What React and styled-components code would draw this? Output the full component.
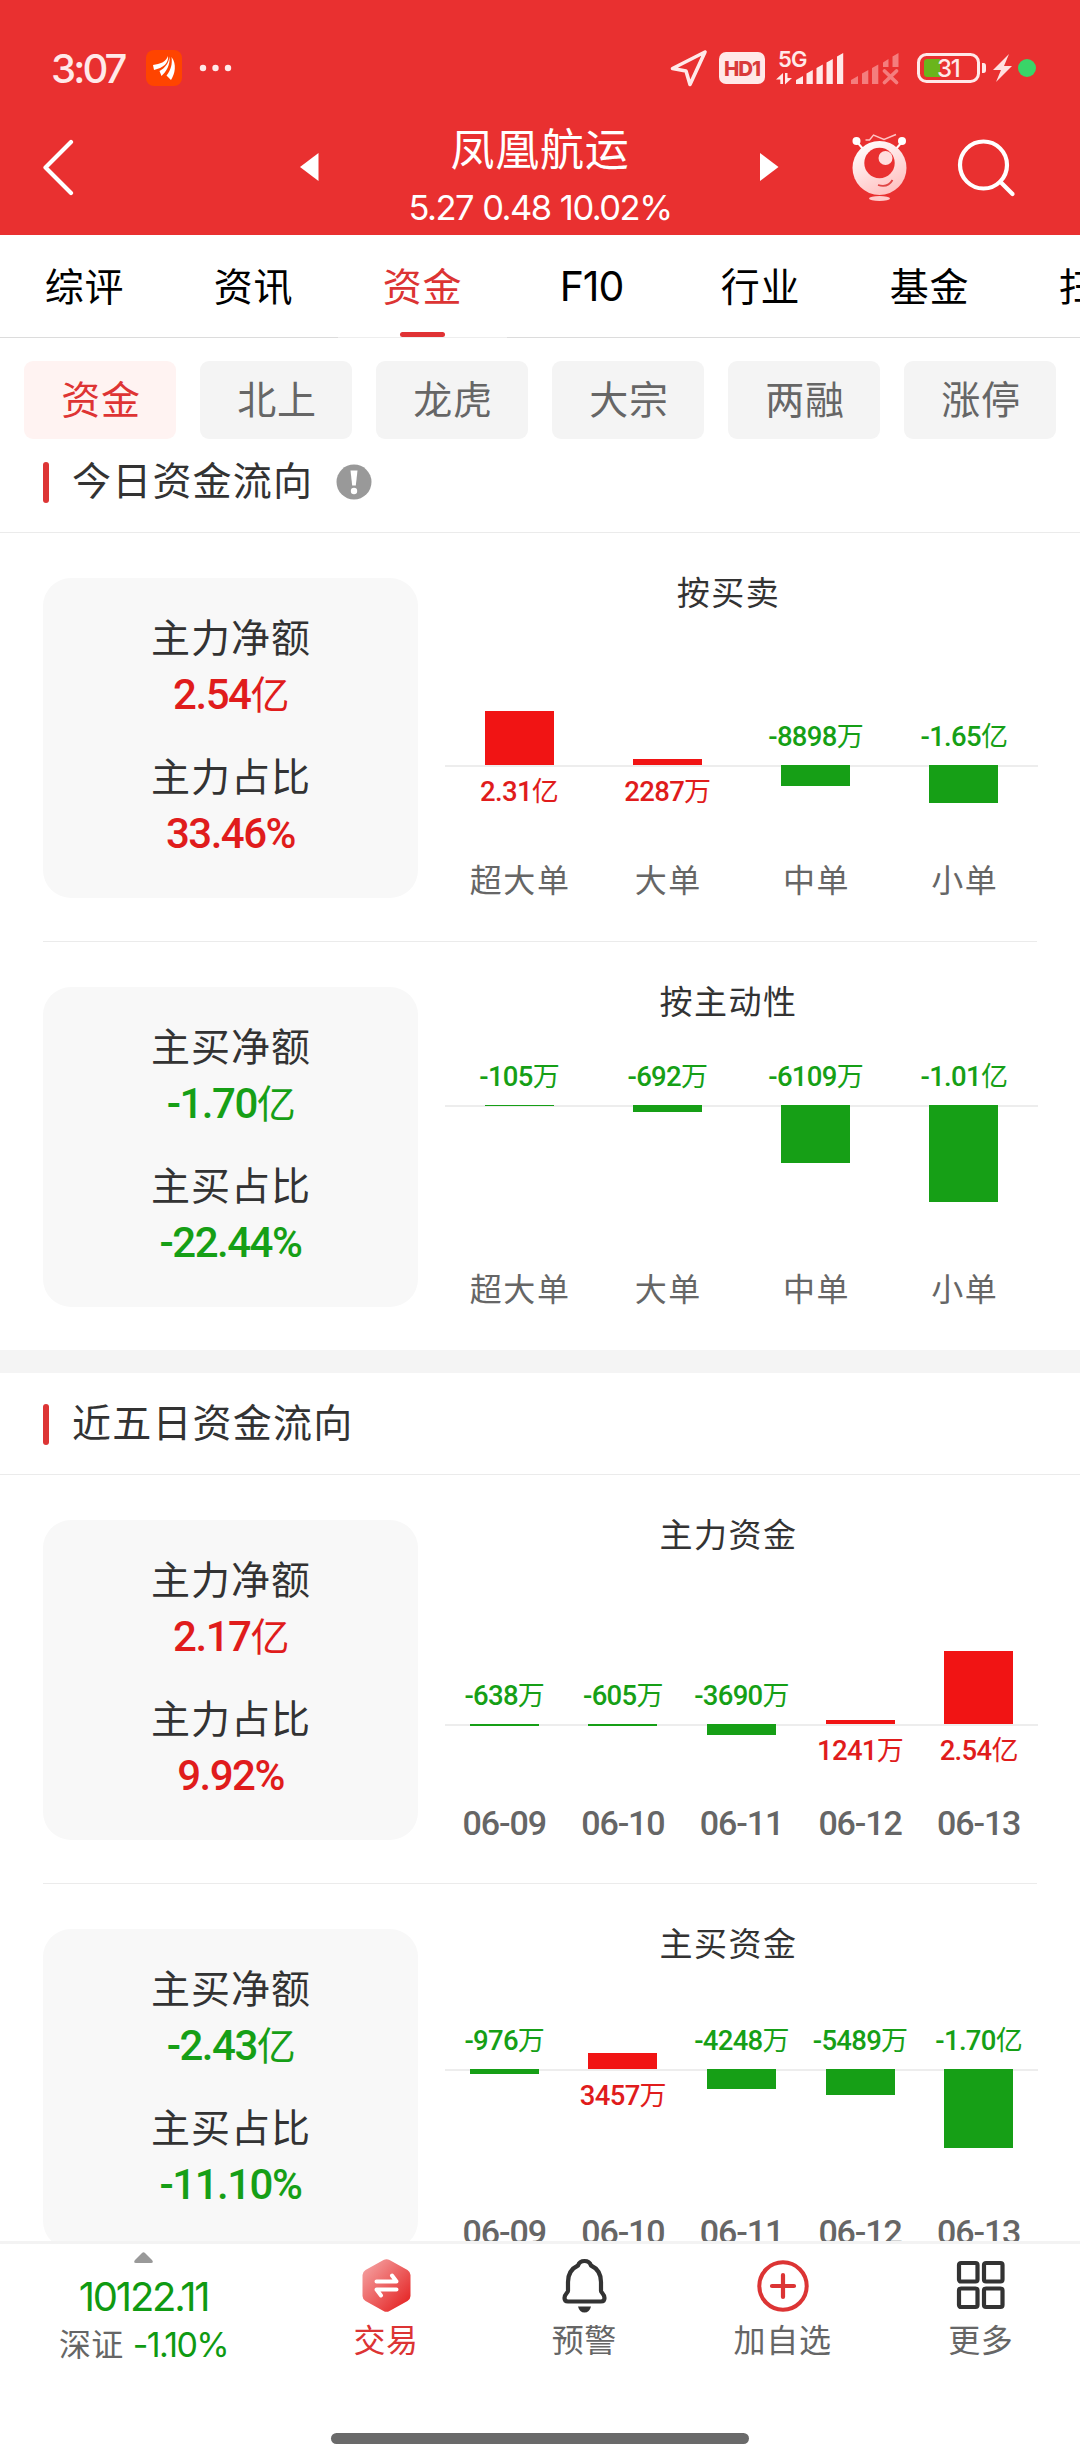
import React from "react";
import styled, { createGlobalStyle, css } from "styled-components";

const RED = "#f11414";
const GREEN = "#169f16";
const BRAND = "#e93030";
const cjk = '"Noto Sans CJK SC", sans-serif';

const GlobalStyle = createGlobalStyle`
  * { box-sizing: border-box; }
  body { margin: 0; background: #fff; }
`;

const Screen = styled.div`
  width: 1080px;
  height: 2460px;
  display: flex;
  flex-direction: column;
  overflow: hidden;
  background: #fff;
  color: #333;
  font-family: Roboto, ${cjk};
  white-space: nowrap;
`;

/* ---------- header ---------- */

const Header = styled.header`
  flex: none;
  height: 235px;
  background: ${BRAND};
  color: #fff;
`;

const StatusBar = styled.div`
  height: 105px;
  padding: 32px 43px 0 51px;
  display: flex;
  justify-content: space-between;
`;

const StatusSide = styled.div`
  height: 72px;
  display: flex;
  align-items: center;
`;

const Clock = styled.span`
  width: 95px;
  font: 500 40px/73px Inter, sans-serif;
  letter-spacing: -2.9px;
  color: #ffe9e9;
`;

const HdBadge = styled.span`
  width: 46px;
  height: 32px;
  margin: 0 11px;
  border-radius: 7px;
  background: #ffe9e9;
  color: #d93a3a;
  text-align: center;
  font: 800 20.5px/33px Inter, sans-serif;
  letter-spacing: -1px;
`;

const NavRow = styled.div`
  height: 130px;
  display: flex;
`;

const NavSide = styled.div`
  width: 300px;
  display: flex;
  padding-top: 27px;
  padding-left: ${(p) => p.$left}px;
  gap: ${(p) => p.$gap || 0}px;
`;

const TitleBlock = styled.div`
  width: 480px;
  display: grid;
  grid-template-columns: 20px 1fr 20px;
`;

const Arrow = styled.svg`
  margin-top: 47px;
`;

const TitleText = styled.div`
  text-align: center;
`;

const StockName = styled.div`
  margin-top: 16px;
  font: 400 44px/60px Roboto, ${cjk};
  letter-spacing: 0.8px;
`;

const Quote = styled.div`
  margin-top: 7px;
  font: 400 34.5px/40px Inter, sans-serif;
  letter-spacing: -1.5px;
  word-spacing: 1px;
`;

/* ---------- tabs ---------- */

const Tabs = styled.nav`
  flex: none;
  height: 103px;
  display: flex;
  overflow: hidden;
`;

const Tab = styled.div`
  flex: none;
  width: 169px;
  display: flex;
  flex-direction: column;
  align-items: center;
  border-bottom: 1px solid ${(p) => (p.$active ? "#eee" : "#dcdcdc")};
  color: ${(p) => (p.$active ? "#dc3434" : "#000")};
  font: 400 ${(p) => (p.$latin ? 41 : 39)}px/103px Inter, ${cjk};
  letter-spacing: ${(p) => (p.$latin ? "-1px" : "0.8px")};
`;

const TabLabel = styled.span`
  height: 97px;
`;

const TabMark = styled.span`
  width: 45px;
  height: 6px;
  border-radius: 3px;
  background: #e03234;
`;

const Chips = styled.div`
  flex: none;
  padding: 23px 24px 0;
  display: flex;
  gap: 24px;
`;

const Chip = styled.div`
  width: 152px;
  height: 78px;
  padding-left: 2px;
  border-radius: 9px;
  text-align: center;
  font-size: 39px;
  line-height: 80px;
  letter-spacing: 0.8px;
  background: ${(p) => (p.$active ? "#fff3f2" : "#f4f4f4")};
  color: ${(p) => (p.$active ? "#de3434" : "#666")};
`;

/* ---------- sections ---------- */

const Content = styled.main`
  flex: 1;
  min-height: 0;
  overflow: hidden;
`;

const SectionHead = styled.h2`
  margin: 0;
  height: ${(p) => p.$height}px;
  padding: 0 43px 29px;
  display: flex;
  align-items: flex-end;
  border-bottom: 1px solid #ebebeb;
  font-size: 39px;
  font-weight: 400;
  letter-spacing: 1.2px;
`;

const Accent = styled.span`
  width: 6px;
  height: 41px;
  margin-right: 23px;
  border-radius: 3px;
  background: #dd3535;
`;

const HeadText = styled.span`
  padding-bottom: 1px;
  line-height: 40px;
`;

const InfoIcon = styled.svg`
  margin: 0 0 3px 23px;
`;

const Divider = styled.div`
  height: 23px;
  background: #f4f4f4;
`;

const Row = styled.section`
  height: ${(p) => p.$height || 409}px;
  margin: 0 43px;
  display: flex;
  border-bottom: ${(p) => (p.$line ? "1px solid #ebebeb" : "none")};
`;

const Card = styled.div`
  width: 375px;
  height: 320px;
  margin-top: 45px;
  padding-top: 35px;
  border-radius: 28px;
  background: #f8f8f8;
  text-align: center;
`;

const CardLabel = styled.div`
  padding-left: 1px;
  font-size: 39px;
  line-height: 52px;
  letter-spacing: 1px;
`;

const CardValue = styled.div`
  padding-top: 1px;
  margin-bottom: ${(p) => (p.$last ? 0 : 27)}px;
  font-size: 42px;
  font-weight: 500;
  line-height: 57px;
  letter-spacing: -1.5px;
  color: ${(p) => (p.$up ? "#e01c1c" : GREEN)};
`;

const Unit = styled.span`
  font-size: ${(p) => p.$size}px;
  font-weight: 400;
`;

const Pane = styled.div`
  flex: 1;
  margin-right: -1px;
  padding: 40px 0 0 1px;
`;

const ChartTitle = styled.div`
  height: 40px;
  text-align: center;
  font-size: 33px;
  line-height: 42px;
  letter-spacing: 1.5px;
`;

const Plot = styled.div`
  margin-left: 26px;
  display: flex;
`;

const Column = styled.div`
  flex: 1;
  min-width: 0;
`;

const Upper = styled.div`
  height: ${(p) => p.$size}px;
  display: flex;
  flex-direction: column;
  align-items: center;
  justify-content: flex-end;
`;

const Lower = styled.div`
  height: ${(p) => p.$size}px;
  display: flex;
  flex-direction: column;
  align-items: center;
  box-shadow: inset 0 2px 0 #ededed;
`;

const Bar = styled.div`
  width: 69px;
  background: ${(p) => (p.$up ? RED : GREEN)};
`;

const BarLabel = styled.div`
  height: 30px;
  ${(p) =>
    p.$up
      ? css`margin-top: 12px; color: #e01c1c;`
      : css`margin-bottom: 13px; color: ${GREEN};`}
  font-size: 27.5px;
  font-weight: 500;
  line-height: 30px;
  letter-spacing: -0.7px;
`;

const Category = styled.div`
  height: 39px;
  padding-left: ${(p) => (p.$date ? 0 : 2)}px;
  text-align: center;
  color: #666;
  font-size: ${(p) => (p.$date ? 34 : 32)}px;
  font-weight: ${(p) => (p.$date ? 500 : 400)};
  line-height: 41px;
  letter-spacing: ${(p) => (p.$date ? -1.1 : 1.6)}px;
`;

/* ---------- bottom bar ---------- */

const BottomBar = styled.footer`
  flex: none;
  height: 219px;
  border-top: 3px solid #f3f3f3;
  display: flex;
  flex-direction: column;
  justify-content: space-between;
  align-items: center;
  padding-bottom: 16px;
`;

const BottomItems = styled.div`
  width: 100%;
  display: flex;
`;

const IndexCell = styled.div`
  width: 287px;
  padding-top: 8px;
  display: flex;
  flex-direction: column;
  align-items: center;
`;

const IndexValue = styled.div`
  margin-top: 12px;
  font: 400 40px/44px Inter, sans-serif;
  letter-spacing: -2.2px;
  color: #0f9a12;
`;

const IndexChange = styled.div`
  margin-top: 3px;
  display: flex;
  align-items: center;
  gap: 9px;
  font-size: 32px;
  line-height: 46px;
  letter-spacing: 0.4px;
  color: #666;
`;

const Percent = styled.span`
  font: 400 34px/44px Inter, sans-serif;
  letter-spacing: -1.6px;
  color: #0f9a12;
`;

const Action = styled.div`
  width: 198.25px;
  padding-top: 14px;
  display: flex;
  flex-direction: column;
  align-items: center;
  font-size: 32px;
  line-height: 46px;
  letter-spacing: 0.7px;
  color: ${(p) => (p.$hot ? "#dc3434" : "#666")};
`;

const ActionText = styled.span`
  margin-top: 5px;
`;

const HomeBar = styled.div`
  width: 418px;
  height: 11px;
  border-radius: 6px;
  background: #6a6a6a;
`;

/* ---------- icons ---------- */

const AppLogo = () => (
  <svg width="36" height="36" viewBox="0 0 36 36">
    <rect width="36" height="36" rx="8" fill="#ff4400" />
    <path d="M7 15C14 14 20 12 22 6C23 13 17 18 8 20Z" fill="#fff" />
    <path d="M23.500 6.500C24.500 15 20 22 15.500 26L13.500 21C19 18 23 13 23.500 6.500Z" fill="#fff" />
    <path d="M25.500 7C31 14 29 24 25 30L20.500 25.500C25 20 26.500 14 25.500 7Z" fill="#fff" />
  </svg>
);

const Dots = styled.svg`
  margin-left: 17px;
`;

const MoreDots = () => (
  <Dots width="34" height="8" viewBox="0 0 34 8" fill="#ffe9e9">
    <circle cx="4" cy="4" r="3.2" />
    <circle cx="16.500" cy="4" r="3.2" />
    <circle cx="29" cy="4" r="3.2" />
  </Dots>
);

const LocationIcon = () => (
  <svg width="38" height="38" viewBox="0 0 38 38" fill="none" stroke="#ffe9e9" strokeWidth="3.6" strokeLinejoin="round">
    <path d="M35 3L2.500 19.500L16 22L20 35.500Z" />
  </svg>
);

const SignalSvg = styled.svg`
  overflow: visible;
`;

const Signals = () => (
  <SignalSvg width="124" height="36" viewBox="0 0 124 36" fill="#ffe9e9">
    <text x="2" y="16.500" fontFamily="Inter, sans-serif" fontWeight="600" fontSize="22" letterSpacing="-0.8">5G</text>
    <path d="M0 29.500L7 23V34H4.300V29.500ZM9 23H11.500V28H16L9 34.500Z" />
    <path d="M20 34V30L27 26V34ZM30.500 34V23.500L36.800 20V34ZM40.500 34V18L46.800 14.500V34ZM50.500 34V12.500L56.800 9V34ZM61 34V6.500L67.200 3V34Z" />
    <g fill="#f47d7d">
      <path d="M75 34V30L82 26V34ZM86 34V23.500L92.300 20V34ZM96 34V18L102.300 14.500V34ZM107 17V12.500L112.500 9V17ZM116.500 17V6.500L122.500 3V17Z" />
      <path d="M108.500 21L120.500 32.500M120.500 21L108.500 32.500" stroke="#f47d7d" strokeWidth="3.8" strokeLinecap="round" />
    </g>
  </SignalSvg>
);

const BatterySvg = styled.svg`
  margin-left: 17px;
`;

const Battery = () => (
  <BatterySvg width="120" height="36" viewBox="0 0 120 36">
    <rect x="1.500" y="4.500" width="60" height="27" rx="8" fill="none" stroke="#ffe9e9" strokeWidth="3" />
    <path d="M65 13H66.500Q69 13 69 16V20Q69 23 66.500 23H65Z" fill="#ffe9e9" />
    <path d="M10 9H23V27H10Q7 27 7 24V12Q7 9 10 9Z" fill="#6ab51c" />
    <text x="20" y="26.500" fontFamily="Inter, sans-serif" fontWeight="500" fontSize="24" letterSpacing="-1.2" fill="#ffe9e9">31</text>
    <path d="M92 4L76 20H84L79 32L95 16H87Z" fill="#ffe0e0" />
    <circle cx="110" cy="18" r="9" fill="#39d568" />
  </BatterySvg>
);

const BackIcon = () => (
  <svg width="32" height="72" viewBox="0 0 32 72" fill="none" stroke="#fff" strokeWidth="4.2" strokeLinecap="round" strokeLinejoin="round">
    <path d="M28 10L2.500 35.500L28 61" />
  </svg>
);

const RobotIcon = () => (
  <svg width="58" height="72" viewBox="0 0 58 72">
    <defs>
      <linearGradient id="robot" x1="0.2" y1="0" x2="0.700" y2="1">
        <stop offset="0" stopColor="#fff" />
        <stop offset="1" stopColor="#ffbfbf" />
      </linearGradient>
    </defs>
    <path d="M6 10L13 18M51 10L44 18" stroke="#fff" strokeWidth="2" />
    <circle cx="5.500" cy="9" r="4" fill="#fff" />
    <circle cx="51" cy="9" r="4" fill="#fff" />
    <path d="M14.500 8H18.500L22.500 3L33 7.500L45 2.500" fill="none" stroke="#ffc4c4" strokeWidth="1.4" />
    <circle cx="28.500" cy="36" r="27" fill="url(#robot)" />
    <circle cx="28.500" cy="31" r="15.200" fill={BRAND} />
    <circle cx="34.500" cy="26" r="7" fill="#ffdede" />
    <path d="M27 53Q37 56 41.500 48" fill="none" stroke="#e04545" strokeWidth="1.8" />
    <ellipse cx="28.500" cy="66.500" rx="10.500" ry="2.500" fill="#ffcaca" />
  </svg>
);

const SearchIcon = () => (
  <svg width="60" height="72" viewBox="0 0 60 72" fill="none" stroke="#fff" strokeWidth="4.200" strokeLinecap="round">
    <circle cx="26.500" cy="33" r="23.500" />
    <path d="M43.500 50L55.500 62" />
  </svg>
);

const UpMark = () => (
  <svg width="19" height="11" viewBox="0 0 19 11">
    <path d="M8 1Q9.500 -0.500 11 1L18 8Q20 11 17 11H2Q-1 11 1 8Z" fill="#999" />
  </svg>
);

const TradeIcon = () => (
  <svg width="54" height="55" viewBox="0 0 54 55">
    <defs>
      <linearGradient id="hex" x1="0.100" y1="0.100" x2="0.850" y2="0.850">
        <stop offset="0" stopColor="#f49d9d" />
        <stop offset="1" stopColor="#e62e2e" />
      </linearGradient>
    </defs>
    <path d="M24.500 2Q27.500 0.300 30.500 2L48.500 12Q51.500 14 51.500 17V38Q51.500 41 48.500 43L30.500 53Q27.500 54.700 24.500 53L6.500 43Q3.500 41 3.500 38V17Q3.500 14 6.500 12Z" fill="url(#hex)" />
    <path d="M17.500 23.500H37.500L33 17.500M37.500 31.500H17.500L22 37.500" fill="none" stroke="#fff" strokeWidth="4" strokeLinecap="round" strokeLinejoin="round" />
  </svg>
);

const BellIcon = () => (
  <svg width="54" height="55" viewBox="0 0 54 55">
    <path
      d="M27.500 3C24 3 22 4.500 21 7.500C13.500 11 11 18 11 24V33C11 34.500 7.500 36 7.500 40C7.500 42.500 9 43.500 11 43.500H44C46 43.500 47.500 42.500 47.500 40C47.500 36 44 34.500 44 33V24C44 18 41.500 11 34 7.500C33 4.500 31 3 27.500 3Z"
      fill="none" stroke="#333" strokeWidth="4.200" strokeLinejoin="round"
    />
    <path d="M21 48.500H34Q32.500 54.500 27.500 54.500Q22.500 54.500 21 48.500Z" fill="#333" />
  </svg>
);

const AddIcon = () => (
  <svg width="54" height="55" viewBox="0 0 54 55" fill="none" stroke="#dc3434" strokeLinecap="round">
    <circle cx="27" cy="28" r="23.700" strokeWidth="4" />
    <path d="M16 28H38M27 17V39" strokeWidth="4.200" />
  </svg>
);

const GridIcon = () => (
  <svg width="54" height="55" viewBox="0 0 54 55" fill="none" stroke="#333" strokeWidth="4.200">
    <rect x="5" y="5" width="18.500" height="18.500" rx="2" />
    <rect x="30" y="5" width="18.500" height="18.500" rx="2" />
    <rect x="5" y="30.500" width="18.500" height="18.500" rx="2" />
    <rect x="30" y="30.500" width="18.500" height="18.500" rx="2" />
  </svg>
);

/* ---------- data ---------- */

const tabs = ["综评", "资讯", "资金", "F10", "行业", "基金", "扫雷"];
const chips = ["资金", "北上", "龙虎", "大宗", "两融", "涨停"];

const today = [
  {
    card: [["主力净额", "2.54亿"], ["主力占比", "33.46%"]],
    title: "按买卖",
    axis: 232,
    bars: [["超大单", "2.31亿", 54], ["大单", "2287万", 6], ["中单", "-8898万", 21], ["小单", "-1.65亿", 38]],
  },
  {
    card: [["主买净额", "-1.70亿"], ["主买占比", "-22.44%"]],
    title: "按主动性",
    axis: 163,
    bars: [["超大单", "-105万", 1], ["大单", "-692万", 6.5], ["中单", "-6109万", 58], ["小单", "-1.01亿", 97]],
  },
];

const fiveDays = [
  {
    card: [["主力净额", "2.17亿"], ["主力占比", "9.92%"]],
    title: "主力资金",
    axis: 249,
    bars: [["06-09", "-638万", 2], ["06-10", "-605万", 1.600], ["06-11", "-3690万", 11], ["06-12", "1241万", 4], ["06-13", "2.54亿", 73]],
  },
  {
    card: [["主买净额", "-2.43亿"], ["主买占比", "-11.10%"]],
    title: "主买资金",
    axis: 185,
    bars: [["06-09", "-976万", 5], ["06-10", "3457万", 16], ["06-11", "-4248万", 20], ["06-12", "-5489万", 26], ["06-13", "-1.70亿", 79]],
  },
];

const Amount = ({ text, size }) => {
  const [, number, unit] = text.match(/^([-\d.]+)(.*)$/);
  return (
    <>
      {number}
      {unit === "%" ? unit : <Unit $size={size}>{unit}</Unit>}
    </>
  );
};

const FlowRow = ({ data, line, height }) => (
  <Row $line={line} $height={height}>
    <Card>
      {data.card.map(([label, value], i) => (
        <React.Fragment key={label}>
          <CardLabel>{label}</CardLabel>
          <CardValue $up={!value.startsWith("-")} $last={i === 1}>
            <Amount text={value} size={39} />
          </CardValue>
        </React.Fragment>
      ))}
    </Card>
    <Pane>
      <ChartTitle>{data.title}</ChartTitle>
      <Plot>
        {data.bars.map(([name, value, size]) => {
          const up = !value.startsWith("-");
          const label = (
            <BarLabel $up={up}>
              <Amount text={value} size={27} />
            </BarLabel>
          );
          const bar = <Bar $up={up} style={{ height: size }} />;
          return (
            <Column key={name}>
              <Upper $size={data.axis - 80}>{up ? bar : label}</Upper>
              <Lower $size={328 - data.axis}>{up ? label : bar}</Lower>
              <Category $date={name.includes("-")}>{name}</Category>
            </Column>
          );
        })}
      </Plot>
    </Pane>
  </Row>
);

export default function App() {
  return (
    <Screen>
      <GlobalStyle />
      <Header>
        <StatusBar>
          <StatusSide>
            <Clock>3:07</Clock>
            <AppLogo />
            <MoreDots />
          </StatusSide>
          <StatusSide>
            <LocationIcon />
            <HdBadge>HD1</HdBadge>
            <Signals />
            <Battery />
          </StatusSide>
        </StatusBar>
        <NavRow>
          <NavSide $left={43}>
            <BackIcon />
          </NavSide>
          <TitleBlock>
            <Arrow width="19" height="30" viewBox="0 0 19 30">
              <path d="M0 15L18.500 1V29Z" fill="#fff" />
            </Arrow>
            <TitleText>
              <StockName>凤凰航运</StockName>
              <Quote>5.27 0.48 10.02%</Quote>
            </TitleText>
            <Arrow width="19" height="30" viewBox="0 0 19 30">
              <path d="M18.500 15L0 1V29Z" fill="#fff" />
            </Arrow>
          </TitleBlock>
          <NavSide $left={71} $gap={48}>
            <RobotIcon />
            <SearchIcon />
          </NavSide>
        </NavRow>
      </Header>

      <Tabs>
        {tabs.map((name) => (
          <Tab key={name} $active={name === "资金"} $latin={name === "F10"}>
            <TabLabel>{name}</TabLabel>
            {name === "资金" && <TabMark />}
          </Tab>
        ))}
      </Tabs>
      <Chips>
        {chips.map((name, i) => (
          <Chip key={name} $active={i === 0}>{name}</Chip>
        ))}
      </Chips>

      <Content>
        <SectionHead $height={94}>
          <Accent />
          <HeadText>今日资金流向</HeadText>
          <InfoIcon width="36" height="36" viewBox="0 0 36 36">
            <circle cx="18" cy="18" r="17.500" fill="#999" />
            <path d="M14.500 6.500H21.500L19.800 21.500H16.200Z" fill="#fff" />
            <circle cx="18" cy="27" r="3.200" fill="#fff" />
          </InfoIcon>
        </SectionHead>
        <FlowRow data={today[0]} line />
        <FlowRow data={today[1]} height={408} />
        <Divider />
        <SectionHead $height={102}>
          <Accent />
          <HeadText>近五日资金流向</HeadText>
        </SectionHead>
        <FlowRow data={fiveDays[0]} line />
        <FlowRow data={fiveDays[1]} />
      </Content>

      <BottomBar>
        <BottomItems>
          <IndexCell>
            <UpMark />
            <IndexValue>10122.11</IndexValue>
            <IndexChange>
              深证 <Percent>-1.10%</Percent>
            </IndexChange>
          </IndexCell>
          <Action $hot>
            <TradeIcon />
            <ActionText>交易</ActionText>
          </Action>
          <Action>
            <BellIcon />
            <ActionText>预警</ActionText>
          </Action>
          <Action>
            <AddIcon />
            <ActionText>加自选</ActionText>
          </Action>
          <Action>
            <GridIcon />
            <ActionText>更多</ActionText>
          </Action>
        </BottomItems>
        <HomeBar />
      </BottomBar>
    </Screen>
  );
}
